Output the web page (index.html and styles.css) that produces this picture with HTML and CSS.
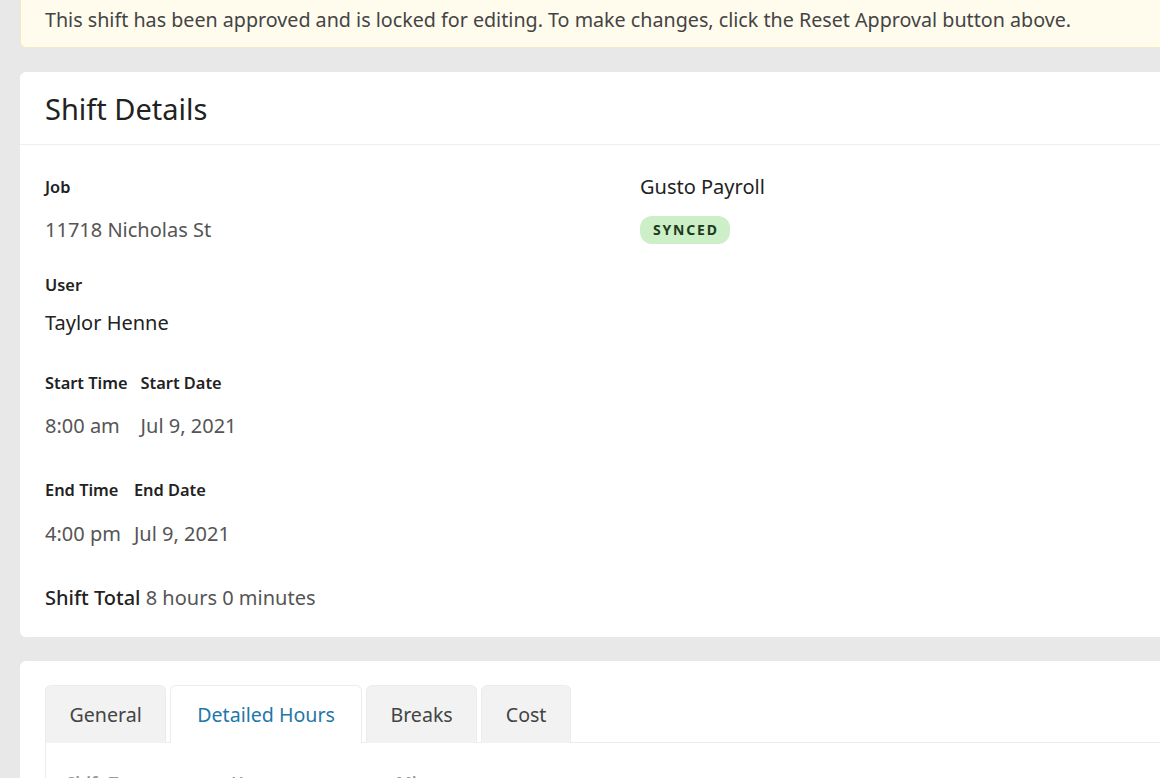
FILE: index.html
```html
<!DOCTYPE html>
<html lang="en">
<head>
  <meta charset="UTF-8">
  <title>Shift Details</title>
  <link rel="stylesheet" href="styles.css">
</head>
<body>
  <div class="page">
    <div class="alert">
      This shift has been approved and is locked for editing. To make changes, click the Reset Approval button above.
    </div>

    <div class="card">
      <div class="card-header">
        <h2>Shift Details</h2>
      </div>
      <div class="card-body details">
        <div class="col main-col">
          <div class="label">Job</div>
          <div class="value muted job">11718 Nicholas St</div>

          <div class="label user">User</div>
          <div class="value name">Taylor Henne</div>

          <div class="pair start">
            <div>
              <div class="label">Start Time</div>
              <div class="value muted">8:00 am</div>
            </div>
            <div>
              <div class="label">Start Date</div>
              <div class="value muted">Jul 9, 2021</div>
            </div>
          </div>
          <div class="pair end">
            <div>
              <div class="label">End Time</div>
              <div class="value muted">4:00 pm</div>
            </div>
            <div>
              <div class="label">End Date</div>
              <div class="value muted">Jul 9, 2021</div>
            </div>
          </div>
          <div class="total"><b>Shift Total</b> <span class="muted">8 hours 0 minutes</span></div>
        </div>
        <div class="col">
          <div class="sync-title">Gusto Payroll</div>
          <span class="badge">SYNCED</span>
        </div>
      </div>
    </div>

    <div class="card tabs-card">
      <div class="tabs">
        <button class="tab">General</button>
        <button class="tab active">Detailed Hours</button>
        <button class="tab">Breaks</button>
        <button class="tab">Cost</button>
      </div>
      <div class="tab-panel">
        <div class="panel-head">
          <span>Shift Type</span>
          <span>Hours</span>
          <span>Minutes</span>
        </div>
      </div>
    </div>
  </div>
</body>
</html>
```

FILE: styles.css
```css
html, body {
  margin: 0;
  padding: 0;
  height: 100%;
  overflow: hidden;
}
body {
  font-family: "Noto Sans", "Open Sans", sans-serif;
  background: #e8e8e8;
  color: #222;
}
.page {
  width: 1220px;
  padding-left: 20px;
  margin-top: -20px;
}
.alert {
  background: #fffcee;
  border: 1px solid #f3e9c2;
  border-top: none;
  border-radius: 0 0 6px 6px;
  padding: 26px 24px 13px 24px;
  font-size: 19.7px;
  color: #444;
  line-height: 28px;
}
.card {
  background: white;
  border-radius: 6px;
  margin-top: 24px;
}
.card-header {
  border-bottom: 1px solid #eeeeee;
  padding: 0 25px;
  height: 72px;
  display: flex;
  align-items: center;
}
.card-header h2 {
  margin: 0;
  font-size: 29px;
  font-weight: 400;
  color: #222;
}
.details {
  display: flex;
  padding: 31px 25px 25px 25px;
}
.details .col {
  flex-shrink: 0;
}
.details .main-col {
  width: 595px;
}
.label {
  font-size: 16.4px;
  font-weight: 600;
  color: #222;
  line-height: 22px;
}
.value {
  font-size: 20px;
  line-height: 28px;
  color: #222;
}
.muted {
  color: #555;
}
.job {
  margin-top: 18px;
}
.user {
  margin-top: 30px;
}
.name {
  margin-top: 13px;
}
.pair {
  display: flex;
  gap: 13px;
}
.pair .value {
  margin-top: 18px;
}
.start {
  margin-top: 35px;
}
.end {
  margin-top: 39px;
}
.end .value {
  margin-top: 19px;
}
.total {
  font-size: 20px;
  line-height: 28px;
  margin-top: 36px;
}
.total b {
  font-weight: 500;
}
.sync-title {
  font-size: 20px;
  line-height: 22px;
  color: #222;
}
.badge {
  display: inline-block;
  margin-top: 18px;
  background: #ccefc8;
  color: #1d3a1d;
  font-size: 14px;
  line-height: 20px;
  font-weight: 700;
  letter-spacing: 1.8px;
  padding: 4px 11px 4px 13px;
  border-radius: 12px;
}
.tabs-card {
  padding: 24px 25px 0 25px;
  height: 140px;
}
.tabs {
  display: flex;
  gap: 4px;
}
.tab {
  font-family: inherit;
  font-size: 19.6px;
  color: #444;
  background: #f2f2f2;
  border: 1px solid #ececec;
  border-bottom: none;
  border-radius: 6px 6px 0 0;
  padding: 0 23.5px;
  height: 58px;
  cursor: pointer;
}
.tab.active {
  background: white;
  color: #1f77a8;
  padding: 0 26px;
}
.tab-panel {
  border-left: 1px solid #ececec;
  border-top: 1px solid #ececec;
  margin-top: -1px;
  padding: 30px 20px 20px 20px;
}
.panel-head {
  display: grid;
  grid-template-columns: 165px 165px 165px;
  font-size: 17px;
  line-height: 22px;
  font-weight: 600;
  color: #999;
}
```
